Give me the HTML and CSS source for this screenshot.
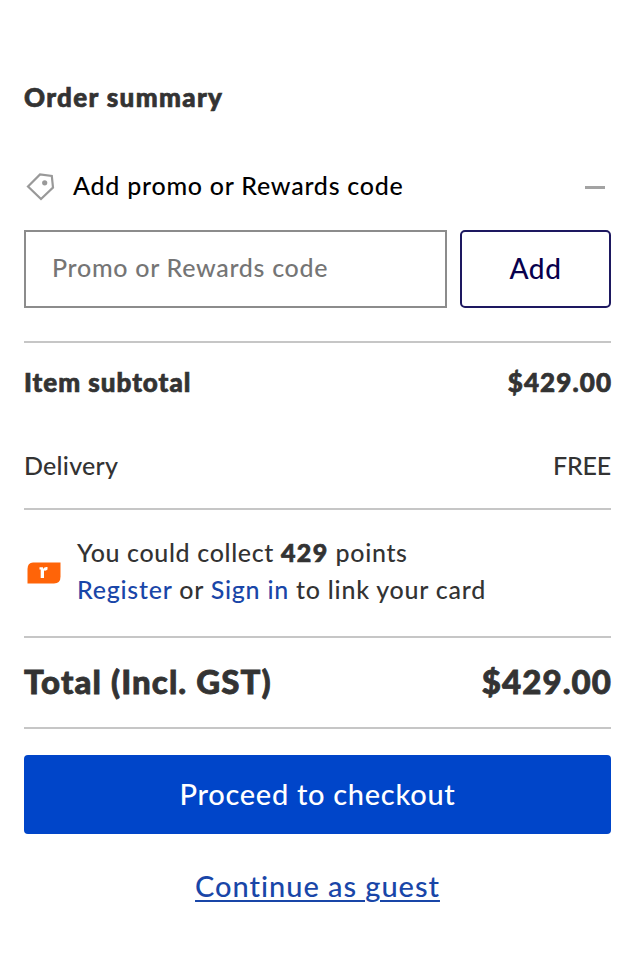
FILE: index.html
```html
<!DOCTYPE html>
<html lang="en">
<head>
<meta charset="utf-8">
<title>Order summary</title>
<link rel="stylesheet" href="styles.css">
</head>
<body>
<main class="summary">
  <h1 class="title">Order summary</h1>
  <div class="promo-head">
    <svg class="tag" width="30" height="30" viewBox="0 0 30 30" fill="none"><path d="M3 15.500 15 3.500 26.800 5 28 16.500 16 28Z" stroke="#999" stroke-width="2.200"/><circle cx="19.700" cy="11.800" r="2.600" fill="#999"/></svg>
    <span class="promo-label">Add promo or Rewards code</span>
    <span class="minus"></span>
  </div>
  <form class="promo-form">
    <div class="field">Promo or Rewards code</div>
    <button type="button" class="add">Add</button>
  </form>
  <section class="amounts">
    <div class="row strong"><span>Item subtotal</span><span class="price">$429.00</span></div>
    <div class="row delivery"><span>Delivery</span><span class="free">FREE</span></div>
  </section>
  <section class="rewards">
    <svg class="logo" width="34" height="22" viewBox="0 0 34 22"><path d="M6 .5H33.500V14.500Q33.500 21.500 27 21.500H.5V7Q.5 .5 6 .5Z" fill="#ff6408"/><path d="M12.500 5.300H16V7Q17.400 4.600 20.500 5.100V7.600Q19.300 9 17 8.500V16H13.700V7.400H12.500Z" fill="#fff"/></svg>
    <p class="points">You could collect <b>429</b> points<br><span class="account"><a>Register</a> or <a>Sign in</a> to link your card</span></p>
  </section>
  <section class="total"><span>Total (Incl. GST)</span><span class="sum">$429.00</span></section>
  <button type="button" class="checkout">Proceed to checkout</button>
  <a class="guest">Continue as guest</a>
</main>
</body>
</html>
```
FILE: styles.css
```css
* { box-sizing: border-box; }
body { margin: 0; background: #fff; color: #333; font: 500 25px/37px Lato, "Liberation Sans", sans-serif; font-variant-ligatures: none; }
.summary { display: flex; flex-direction: column; padding: 79px 27px 0 24px; white-space: nowrap; }
.title { margin: 0; font-size: 26px; font-weight: 900; height: 37px; letter-spacing: 1.35px; -webkit-text-stroke: .7px; }
.promo-head { display: flex; align-items: center; height: 37px; margin-top: 51px; color: #000; }
.tag { margin-left: 1px; flex: none; }
.promo-label { margin-left: 18px; letter-spacing: .75px; }
.minus { width: 20px; height: 3px; margin: 3px 6px 0 auto; background: #a3a3a3; }
.promo-form { display: flex; gap: 13px; height: 78px; margin-top: 26px; }
.field { flex: 1; border: 2px solid #8c8c8c; padding: 17px 26px; color: #757575; letter-spacing: .7px; }
.add { width: 151px; padding: 0 0 2px; border: 2px solid #1d1860; border-radius: 5px; background: #fff; color: #08004d; font: 500 28px/37px Lato, sans-serif; letter-spacing: .6px; }
.amounts { height: 167px; margin-top: 33px; border-top: 2px solid #c6c6c6; padding-top: 21px; }
.row { display: flex; justify-content: space-between; height: 37px; }
.strong { font-size: 26px; font-weight: 900; letter-spacing: 1px; -webkit-text-stroke: .7px; }
.price { letter-spacing: 1.1px; margin-right: -1.1px; }
.delivery { margin-top: 46px; letter-spacing: .25px; }
.free { letter-spacing: -.2px; }
.rewards { display: flex; height: 128px; border-top: 2px solid #c6c6c6; padding: 24px 0 0 3px; }
.logo { margin: 28px 16px 0 0; flex: none; }
.points { margin: 0; letter-spacing: .65px; }
.points b { font-weight: 900; letter-spacing: 1.4px; -webkit-text-stroke: .7px; }
.account { letter-spacing: .76px; }
a { color: #1946a8; }
.total { display: flex; justify-content: space-between; height: 93px; border-top: 2px solid #c6c6c6; border-bottom: 2px solid #c6c6c6; padding-top: 25px; font-size: 33px; font-weight: 900; letter-spacing: 1.1px; -webkit-text-stroke: .8px; }
.sum { margin-right: -1.1px; }
.checkout { height: 79px; margin-top: 26px; padding: 0 0 3px; border: 0; border-radius: 4px; background: #0045c9; color: #fff; font: 500 29px/37px Lato, sans-serif; letter-spacing: .7px; }
.guest { align-self: center; height: 37px; margin-top: 33px; font-size: 29px; letter-spacing: .97px; text-decoration: underline; text-decoration-thickness: 2px; text-underline-offset: 3px; }
```
